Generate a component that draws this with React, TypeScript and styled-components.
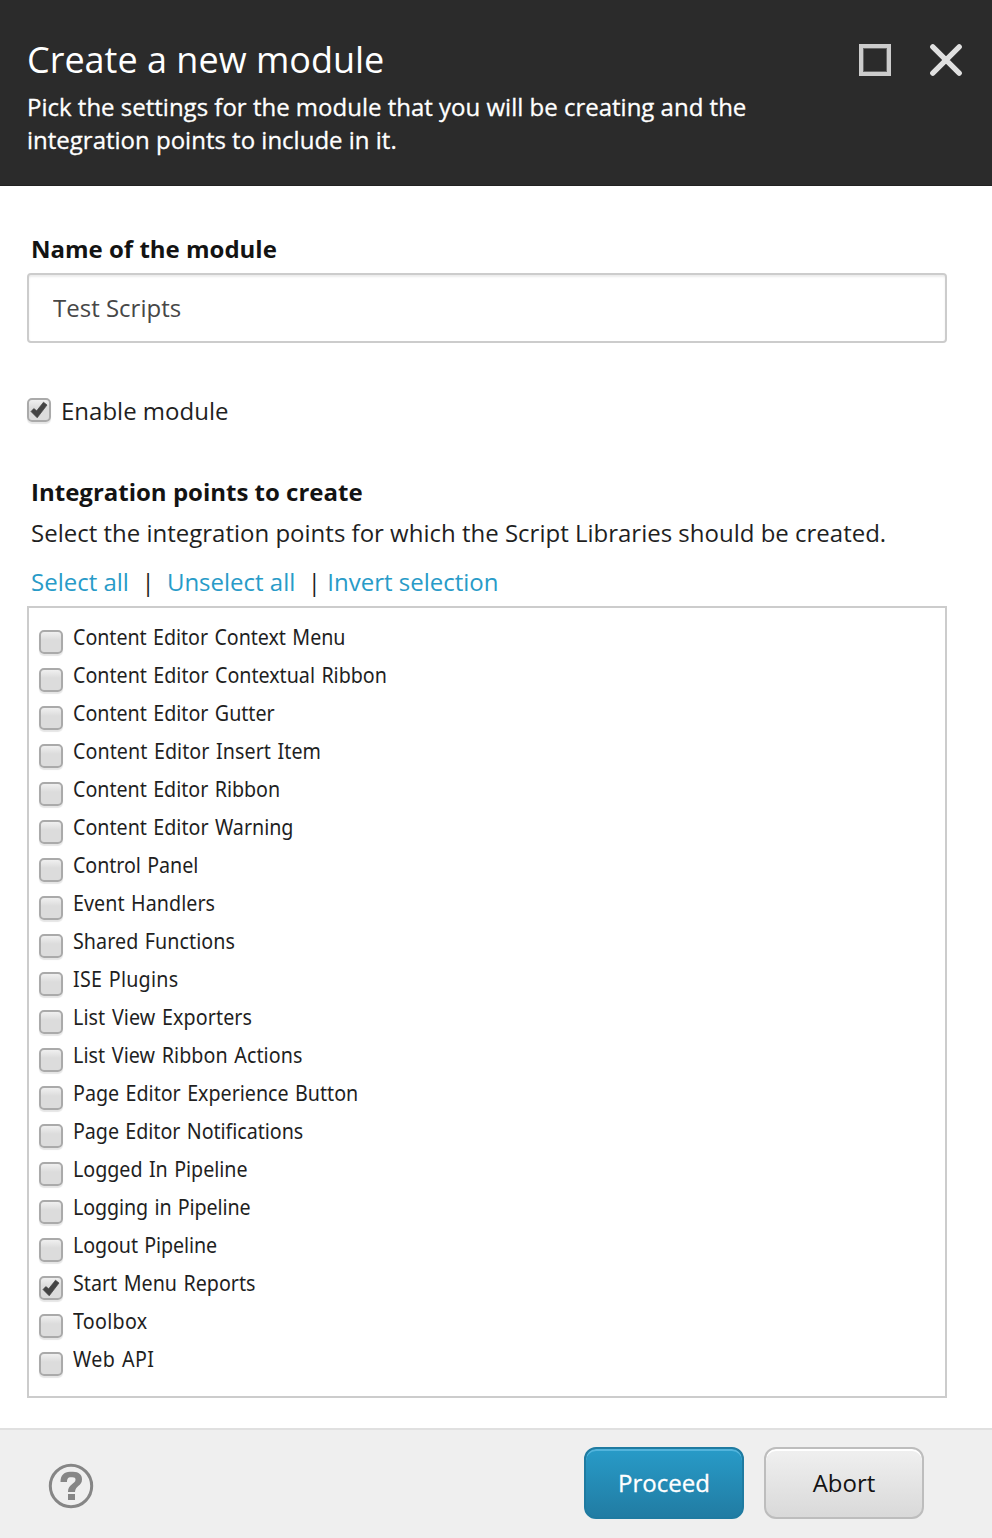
import React, { useState } from "react";
import styled, { createGlobalStyle } from "styled-components";

const GlobalStyle = createGlobalStyle`
  * { box-sizing: border-box; }
  body { margin: 0; background: #fff; color: #1f1f1f; font-family: "Open Sans", sans-serif; font-size: 24px; }
  h1, h2, p { margin: 0; }
`;

const Dialog = styled.div`
  display: flex;
  flex-direction: column;
  width: 100%;
  height: 1538px;
  overflow: hidden;
`;

const Header = styled.header`
  display: flex;
  justify-content: space-between;
  height: 186px;
  padding: 35px 28px 0 27px;
  background: #2b2b2b;
  border-bottom: 1px solid #222;
  color: #fff;
`;

const Title = styled.h1`
  font-size: 36px;
  font-weight: 400;
  line-height: 50px;
`;

const Subtitle = styled.p`
  width: 760px;
  margin-top: 5px;
  font-size: 24px;
  line-height: 33px;
  -webkit-text-stroke: 0.3px #fff;
`;

const WindowControls = styled.div`
  display: flex;
  gap: 35px;
  padding: 7px 0 0;
`;

const WindowButton = styled.button`
  width: 36px;
  height: 36px;
  padding: 0;
  border: 0;
  background: none;
  svg { display: block; }
`;

const Content = styled.main`
  display: flex;
  flex-direction: column;
  flex: 1;
  padding: 47px 45px 0 27px;
`;

const SectionTitle = styled.h2`
  padding-left: 4px;
  color: #131313;
  font-size: 24px;
  font-weight: 700;
  line-height: 32px;
`;

const NameInput = styled.input`
  height: 70px;
  margin-top: 8px;
  padding: 0 24px 2px;
  border: 2px solid #ccc;
  border-radius: 4px;
  box-shadow: inset 0 2px 2px rgba(0, 0, 0, 0.075);
  color: #474747;
  font: 400 24px "Open Sans", sans-serif;
  outline: none;
`;

const EnableRow = styled.label`
  display: flex;
  align-items: flex-start;
  gap: 10px;
  height: 34px;
  margin: 51px 0 48px;
  line-height: 34px;
`;

const Box = styled.span`
  display: block;
  flex: none;
  width: 24px;
  height: 24px;
  margin-top: 4px;
  border: 2px solid #aaa;
  border-radius: 5px;
  background: linear-gradient(#f0f0f0, #dcdcdc 40%, #dcdcdc);
  box-shadow: 0 2px 1px rgba(0, 0, 0, 0.1);
  svg { display: block; }
`;

const Hint = styled.p`
  padding-left: 4px;
  margin-top: 8px;
  line-height: 34px;
`;

const Links = styled.div`
  display: flex;
  margin-top: 15px;
  padding-left: 4px;
  line-height: 34px;
`;

const Link = styled.a`
  color: #289bc8;
`;

const Divider = styled.span<{ $before: number; $after: number }>`
  margin: 0 ${(p) => p.$after}px 0 ${(p) => p.$before}px;
`;

const List = styled.div`
  display: flex;
  flex-direction: column;
  height: 792px;
  margin-top: 7px;
  padding: 12px 10px 0;
  border: 2px solid #ccc;
`;

const Row = styled.label`
  display: flex;
  gap: 10px;
  height: 38px;
  ${Box} { margin-top: 10px; }
`;

const RowText = styled.span<{ $spacing: number }>`
  font-family: "Noto Sans", sans-serif;
  font-size: 22px;
  line-height: 32px;
  word-spacing: 1.5px;
  letter-spacing: ${(p) => p.$spacing}px;
  transform: scaleX(0.895);
  transform-origin: left;
`;

const Footer = styled.footer`
  display: flex;
  align-items: flex-start;
  height: 110px;
  padding: 17px 68px 0 47px;
  border-top: 2px solid #e0e0e0;
  background: #efefef;
`;

const HelpButton = styled.button`
  margin: 15px auto 0 0;
  padding: 0;
  border: 0;
  background: none;
  svg { display: block; }
`;

const ActionButton = styled.button<{ $primary?: boolean }>`
  width: 160px;
  height: 72px;
  margin-left: 20px;
  padding: 0 0 1px;
  border: 2px solid ${(p) => (p.$primary ? "#1f7ba1" : "#bdbdbd")};
  border-radius: 12px;
  background: ${(p) => (p.$primary ? "linear-gradient(#289bc8, #217ca3)" : "linear-gradient(#f0f0f0, #d9d9d9)")};
  box-shadow: inset 0 2px 0 ${(p) => (p.$primary ? "#52b4dc" : "#fff")};
  color: ${(p) => (p.$primary ? "#fff" : "#131313")};
  font: 400 24px "Open Sans", sans-serif;
  -webkit-text-stroke: ${(p) => (p.$primary ? "0.3px #fff" : "0")};
`;

const CheckBox = ({ checked }: { checked: boolean }) => (
  <Box>
    {checked && (
      <svg width="20" height="20" viewBox="0 0 20 20">
        <path d="M2 11.5L4.8 8.6L7.7 10.8L14.5 2.2L18 5L8.2 17.8Z" fill="#444" stroke="#444" strokeWidth="0.7" />
      </svg>
    )}
  </Box>
);

const points: [string, number][] = [
  ["Content Editor Context Menu", -0.06],
  ["Content Editor Contextual Ribbon", -0.02],
  ["Content Editor Gutter", -0.03],
  ["Content Editor Insert Item", 0.06],
  ["Content Editor Ribbon", -0.04],
  ["Content Editor Warning", -0.02],
  ["Control Panel", -0.08],
  ["Event Handlers", 0.05],
  ["Shared Functions", 0.06],
  ["ISE Plugins", 0.25],
  ["List View Exporters", 0.11],
  ["List View Ribbon Actions", 0.08],
  ["Page Editor Experience Button", -0.02],
  ["Page Editor Notifications", -0.06],
  ["Logged In Pipeline", -0.03],
  ["Logging in Pipeline", -0.12],
  ["Logout Pipeline", -0.12],
  ["Start Menu Reports", 0],
  ["Toolbox", 0.3],
  ["Web API", 0.4],
];

export default function App() {
  const [name, setName] = useState("Test Scripts");
  const [enabled, setEnabled] = useState(true);
  const [selected, setSelected] = useState<string[]>(["Start Menu Reports"]);
  const toggle = (p: string) =>
    setSelected((s) => (s.includes(p) ? s.filter((x) => x !== p) : [...s, p]));

  return (
    <Dialog>
      <GlobalStyle />
      <Header>
        <div>
          <Title>Create a new module</Title>
          <Subtitle>
            Pick the settings for the module that you will be creating and the integration points to include in it.
          </Subtitle>
        </div>
        <WindowControls>
          <WindowButton aria-label="Maximize">
            <svg width="36" height="36" viewBox="0 0 36 36">
              <rect x="4" y="4" width="28" height="28" fill="none" stroke="#ccc" strokeWidth="4" />
              <rect x="6.5" y="6.5" width="23" height="23" fill="none" stroke="#666" strokeWidth="1" />
            </svg>
          </WindowButton>
          <WindowButton aria-label="Close">
            <svg width="36" height="36" viewBox="0 0 36 36">
              <path d="M4.8 4.8L31.2 31.2M31.2 4.8L4.8 31.2" stroke="#e0e0e0" strokeWidth="5.4" strokeLinecap="round" />
            </svg>
          </WindowButton>
        </WindowControls>
      </Header>
      <Content>
        <SectionTitle>Name of the module</SectionTitle>
        <NameInput value={name} onChange={(e) => setName(e.target.value)} />
        <EnableRow onClick={() => setEnabled(!enabled)}>
          <CheckBox checked={enabled} />
          <span>Enable module</span>
        </EnableRow>
        <SectionTitle>Integration points to create</SectionTitle>
        <Hint>Select the integration points for which the Script Libraries should be created.</Hint>
        <Links>
          <Link onClick={() => setSelected(points.map((p) => p[0]))}>Select all</Link>
          <Divider $before={12.5} $after={12.3}>|</Divider>
          <Link onClick={() => setSelected([])}>Unselect all</Link>
          <Divider $before={12.5} $after={6.3}>|</Divider>
          <Link onClick={() => setSelected(points.map((p) => p[0]).filter((p) => !selected.includes(p)))}>
            Invert selection
          </Link>
        </Links>
        <List>
          {points.map(([label, spacing]) => (
            <Row key={label} onClick={() => toggle(label)}>
              <CheckBox checked={selected.includes(label)} />
              <RowText $spacing={spacing}>{label}</RowText>
            </Row>
          ))}
        </List>
      </Content>
      <Footer>
        <HelpButton aria-label="Help">
          <svg width="48" height="48" viewBox="0 0 48 48">
            <circle cx="24" cy="24" r="20.7" fill="none" stroke="#868686" strokeWidth="3" />
            <path
              d="M13.5 20C13.5 13.5 17 9.8 23 9.8H26C32 9.8 35 13 35 17.5C35 24 28.2 23.8 28 30H21C21 22 28.5 22 28.5 17.8C28.5 16 27.5 15.3 25.5 15.3H23.5C21.5 15.3 20 16.5 20 20Z"
              fill="#868686"
            />
            <rect x="21" y="32" width="7" height="6" fill="#868686" />
          </svg>
        </HelpButton>
        <ActionButton $primary>Proceed</ActionButton>
        <ActionButton>Abort</ActionButton>
      </Footer>
    </Dialog>
  );
}
